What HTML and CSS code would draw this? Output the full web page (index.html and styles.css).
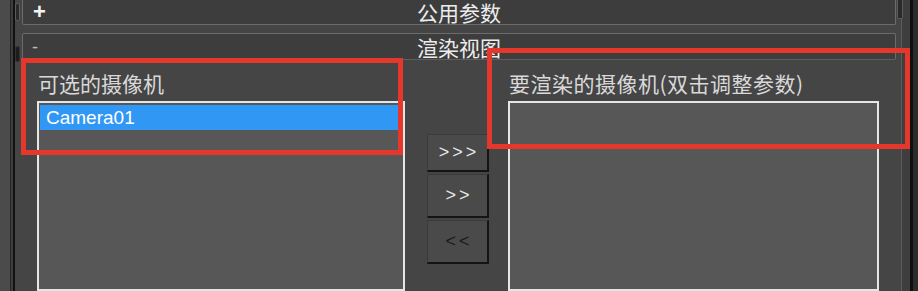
FILE: index.html
```html
<!DOCTYPE html>
<html lang="zh-CN">
<head>
    <meta charset="UTF-8">
    <title>渲染视图</title>
    <link rel="stylesheet" href="styles.css">
</head>
<body>
    <div class="frame">
        <div class="gutter gutter-left">
            <div class="thumb thumb-top"></div>
            <div class="thumb thumb-low"></div>
        </div>

        <div class="main">
            <div class="rollout-head head-common">
                <span class="sign">+</span>
                <span class="title">公用参数</span>
            </div>
            <div class="rollout-head head-render">
                <span class="sign minus">-</span>
                <span class="title">渲染视图</span>
            </div>

            <div class="rollout-body">
                <div class="column col-left">
                    <div class="label">可选的摄像机</div>
                    <ul class="listbox">
                        <li class="selected">Camera01</li>
                    </ul>
                </div>

                <div class="buttons">
                    <button class="move first">&gt;&gt;&gt;</button>
                    <button class="move">&gt;&gt;</button>
                    <button class="move dim">&lt;&lt;</button>
                </div>

                <div class="column col-right">
                    <div class="label">要渲染的摄像机(双击调整参数)</div>
                    <ul class="listbox"></ul>
                </div>
            </div>
        </div>

        <div class="gutter gutter-right">
            <div class="thumb thumb-right"></div>
        </div>
    </div>

    <!-- annotation boxes drawn over the screenshot -->
    <div class="mark mark-left"></div>
    <div class="mark mark-right"></div>
</body>
</html>
```

FILE: styles.css
```css
body {
    margin: 0;
    width: 918px;
    height: 291px;
    overflow: hidden;
    background-color: #454545;
    font-family: 'Noto Sans CJK SC', 'Liberation Sans', sans-serif;
    color: #dcdcdc;
    position: relative;
}

.frame {
    display: flex;
    height: 291px;
}

/* side strips with the little scrollbars */
.gutter {
    display: flex;
    flex-direction: column;
    flex-shrink: 0;
}

.gutter-left {
    width: 22px;
    background: linear-gradient(to right, #4b4b4b 0 10px, #262626 10px 11px, #3d3d3d 11px 13px, #121212 13px 15px, #454545 15px 22px);
}

.gutter-right {
    width: 22px;
    background: linear-gradient(to right, #454545 0 5px, #5a5a5a 5px 6px, #3e3e3e 6px 14px, #0f0f0f 14px 17px, #2c2c2c 17px 22px);
}

.thumb {
    background-color: #2a2a2a;
    border: 1px solid #5c5c5c;
    border-radius: 2px;
}

.thumb-top {
    width: 3px;
    height: 16px;
    margin: 3px 0 0 15px;
}

.thumb-low {
    width: 3px;
    height: 14px;
    margin: 25px 0 0 15px;
    border-color: #333333;
    background-color: #1c1c1c;
}

.thumb-right {
    width: 4px;
    height: 18px;
    margin: 0 0 0 1px;
    border-top: none;
    border-radius: 0 0 2px 2px;
}

.main {
    flex: 1;
    display: flex;
    flex-direction: column;
}

/* rollout headers */
.rollout-head {
    display: grid;
    grid-template-columns: 1fr auto 1fr;
    align-items: center;
    box-sizing: border-box;
    background-color: #3d3d3d;
    border: 1px solid #6b6b6b;
    border-radius: 2px;
    flex-shrink: 0;
}

/* top of this one is scrolled off the window */
.head-common {
    height: 25px;
    border-top: none;
    border-radius: 0 0 2px 2px;
}

.head-render {
    height: 27px;
    margin-top: 8px;
    border-bottom-color: #5e5e5e;
}

.sign {
    font-family: 'Liberation Sans', sans-serif;
    font-weight: bold;
    font-size: 22px;
    color: #f2f2f2;
    padding-left: 10px;
    line-height: 1;
}

.sign.minus {
    font-weight: normal;
    font-size: 18px;
    padding-left: 9px;
    color: #bdbdbd;
}

.title {
    font-size: 21px;
    line-height: 24px;
    color: #ececec;
}

/* rollout content */
.rollout-body {
    flex: 1;
    display: flex;
    overflow: hidden;
    padding-top: 11px;
}

.column {
    display: flex;
    flex-direction: column;
}

.col-left {
    margin-left: 15px;
    width: 368px;
}

.col-right {
    margin-left: 19px;
    width: 371px;
}

.label {
    font-size: 21px;
    line-height: 24px;
    color: #d9d9d9;
    padding-left: 1px;
    margin-bottom: 6px;
    white-space: nowrap;
}

.col-right .label {
    letter-spacing: 0.5px;
}

.listbox {
    list-style: none;
    margin: 0;
    padding: 2px 1px;
    height: 200px;
    background-color: #575757;
    border: 2px solid #e6e6e6;
}

.listbox li {
    font-family: 'Liberation Sans', sans-serif;
    font-size: 19px;
    line-height: 25px;
    padding-left: 6px;
}

.listbox li.selected {
    background-color: #3197f5;
    color: #ffffff;
}

/* transfer buttons */
.buttons {
    display: flex;
    flex-direction: column;
    gap: 2px;
    margin: 63px 0 0 22px;
    width: 62px;
}

.move {
    box-sizing: border-box;
    height: 44px;
    padding: 0;
    background-color: #4a4a4a;
    border: 1px solid #3a3a3a;
    border-right: 2px solid #141414;
    border-bottom: 2px solid #141414;
    font-family: 'Liberation Sans', sans-serif;
    font-size: 18px;
    letter-spacing: 3px;
    text-indent: 3px;
    color: #e8e8e8;
}

.move.first {
    height: 38px;
}

.move.dim {
    color: #1a1a1a;
}

/* red annotation boxes */
.mark {
    position: absolute;
    border: 5px solid #e6372c;
    box-sizing: border-box;
}

.mark-left {
    left: 21px;
    top: 58px;
    width: 382px;
    height: 97px;
}

.mark-right {
    left: 487px;
    top: 48px;
    width: 423px;
    height: 101px;
}
```
